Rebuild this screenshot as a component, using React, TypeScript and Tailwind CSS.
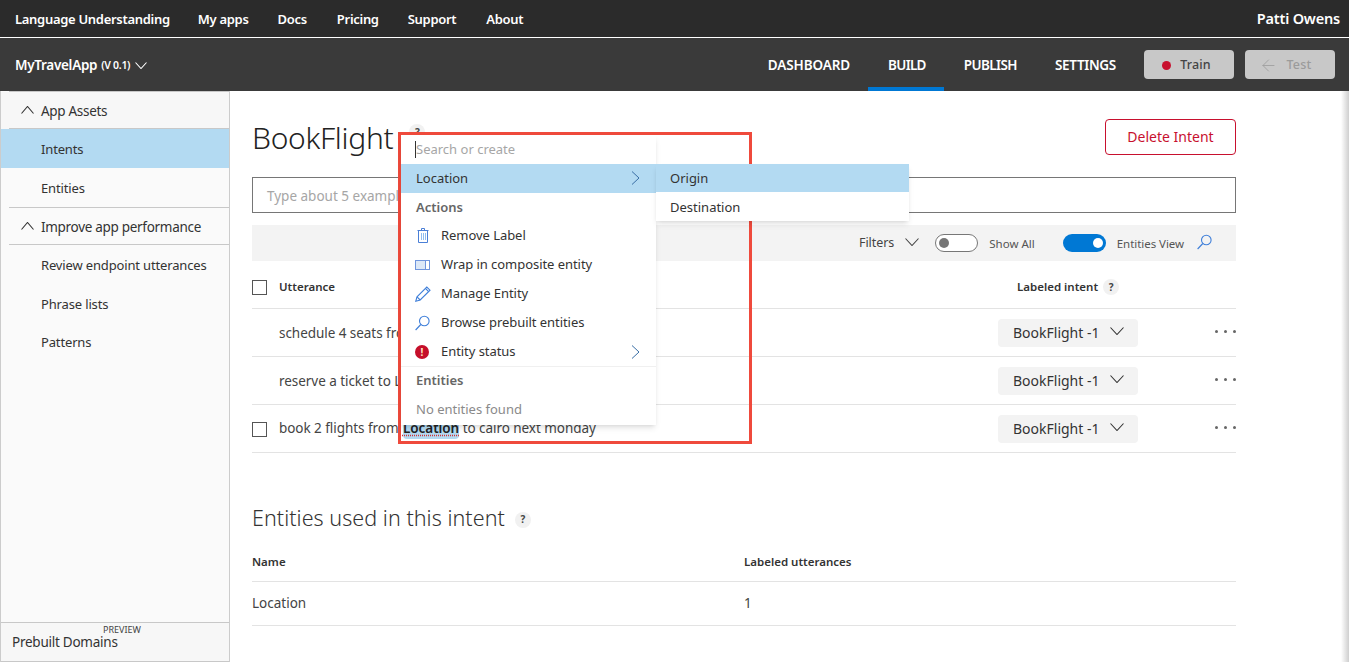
import React from 'react';
import { ArrowLeft } from 'lucide-react';

const font = { fontFamily: '"Noto Sans", sans-serif' };

const Help = ({ cls }: { cls: string }) => (
  <span className={`inline-flex items-center justify-center rounded-full bg-[#f1f1f1] text-[10px] font-bold text-[#444] w-4 h-4 ${cls}`}>?</span>
);

// thin wide chevrons, the icon package ones are too narrow for this UI
const Chev = ({ dir = 'down', w = 14, cls = '' }: { dir?: 'down' | 'up' | 'right'; w?: number; cls?: string }) => {
  if (dir === 'right') {
    return (
      <svg width="9" height="14" viewBox="0 0 9 14" fill="none" stroke="currentColor" strokeWidth="1" className={cls}>
        <polyline points="1,0.5 8,7 1,13.5" />
      </svg>
    );
  }
  const h = Math.round(w * 0.6);
  const pts = dir === 'down' ? `0.5,0.5 ${w / 2},${h - 0.5} ${w - 0.5},0.5` : `0.5,${h - 0.5} ${w / 2},0.5 ${w - 0.5},${h - 0.5}`;
  return (
    <svg width={w} height={h} viewBox={`0 0 ${w} ${h}`} fill="none" stroke="currentColor" strokeWidth="1.1" className={cls}>
      <polyline points={pts} />
    </svg>
  );
};

const SearchIcon = ({ cls = '' }: { cls?: string }) => (
  <svg width="15" height="16" viewBox="0 0 15 16" fill="none" stroke="#3f7fd9" strokeWidth="1.1" className={cls}>
    <circle cx="9.3" cy="6" r="4.8" />
    <line x1="5.8" y1="9.5" x2="0.6" y2="15" />
  </svg>
);

const topLinks = ['My apps', 'Docs', 'Pricing', 'Support', 'About'];

const SideHead = ({ label }: { label: string }) => (
  <div className="flex items-center h-[37px] ml-[8px] pl-[12px] text-[13.5px] text-[#333] border-b border-[#c8c8c8]">
    <Chev dir="up" w={13} cls="mr-[7px] text-[#333]" />
    <span className="tracking-[-0.3px] pt-[2px]">{label}</span>
  </div>
);

const SideItem = ({ label, h, active }: { label: string; h: string; active?: boolean }) => (
  <div className={`flex items-center pl-[40px] pt-[2px] text-[13px] text-[#333] tracking-[-0.15px] ${h} ${active ? 'bg-[#b3daf2]' : ''}`}>{label}</div>
);

const Row = ({ text, check }: { text: React.ReactNode; check?: boolean }) => (
  <div className="flex items-center h-[48px] border-b border-[#e3e3e3]">
    <div className="w-[27px] shrink-0">
      {check && <div className="w-[15px] h-[15px] border border-[#555] mt-[1px]" />}
    </div>
    <div className={`text-[13.5px] text-[#444] w-[719px] tracking-[-0.05px] ${check ? 'pb-[1px]' : 'pt-[2px]'}`}>{text}</div>
    <div className="flex items-center justify-between w-[140px] h-[28px] bg-[#f3f3f3] rounded-sm pl-[15px] pr-[14px] text-[14px] text-[#333]">
      <span>BookFlight -1</span>
      <Chev w={14} cls="-mt-[3px]" />
    </div>
    <div className="flex-1 flex justify-end gap-[6px] pb-[3px]">
      <span className="w-[3px] h-[3px] bg-[#666] rounded-full" />
      <span className="w-[3px] h-[3px] bg-[#666] rounded-full" />
      <span className="w-[3px] h-[3px] bg-[#666] rounded-full" />
    </div>
  </div>
);

const MenuRow = ({ icon, label, arrow }: { icon: React.ReactNode; label: string; arrow?: boolean }) => (
  <div className="flex items-center h-[29px] pl-[14px] pr-[16px] text-[13px] text-[#333]">
    <span className="w-[26px] flex items-center shrink-0">{icon}</span>
    <span className="flex-1 tracking-[-0.05px]">{label}</span>
    {arrow && <Chev dir="right" cls="text-[#3a6ea5]" />}
  </div>
);

const App: React.FC = () => {
  return (
    <div className="relative w-[1349px] h-[662px] overflow-hidden bg-white flex flex-col" style={font}>
      {/* Top bar */}
      <div className="flex items-center justify-between h-[38px] bg-[#2b2b2b] border-b border-white pl-[15px] pr-[9px] text-white shrink-0">
        <div className="flex items-center gap-[29px] text-[13px] font-semibold tracking-[-0.3px] pt-[3px]">
          <span>Language Understanding</span>
          <span className="-ml-[1px]">My apps</span>
          <span>{topLinks[1]}</span>
          <span className="ml-[1px]">{topLinks[2]}</span>
          <span>{topLinks[3]}</span>
          <span className="ml-[1px]">{topLinks[4]}</span>
        </div>
        <span className="text-[14.5px] font-semibold tracking-[-0.2px]">Patti Owens</span>
      </div>

      {/* App bar */}
      <div className="flex items-center h-[53px] bg-[#3a3a3a] pl-[15px] pr-[14px] text-white shrink-0">
        <div className="flex items-center text-[13.5px] font-semibold tracking-[-0.3px] pt-[2px]">
          MyTravelApp
          <span className="text-[10.5px] ml-[4px]">(V 0.1)</span>
          <Chev w={12} cls="ml-[5px]" />
        </div>
        <div className="flex-1" />
        <div className="flex items-center h-full text-[13.5px] font-semibold">
          <div className="pr-[18px] flex items-center h-full pt-[2px] tracking-[-0.1px]">DASHBOARD</div>
          <div className="pl-[20px] pr-[18px] flex items-center h-full border-b-[4px] border-[#0078d4] pt-[5px] tracking-[-0.7px]">BUILD</div>
          <div className="pl-[20px] pr-[19px] flex items-center h-full pt-[2px] tracking-[-0.6px]">PUBLISH</div>
          <div className="px-[19px] flex items-center h-full pt-[2px] tracking-[-0.3px]">SETTINGS</div>
        </div>
        <div className="flex items-center gap-[11px] ml-[9px]">
          <div className="flex items-center justify-center w-[90px] h-[29px] pr-[5px] pt-[1px] rounded-sm bg-[#c8c8c8] text-[12.5px] font-medium text-[#444] tracking-[0.1px]">
            <span className="w-[9px] h-[9px] rounded-full bg-[#c8102e] mr-[9px]" />
            Train
          </div>
          <div className="flex items-center justify-center w-[90px] h-[29px] pr-[10px] pt-[1px] rounded-sm bg-[#c8c8c8] text-[12.5px] font-medium text-[#9b9b9b] tracking-[0.2px]">
            <ArrowLeft size={19} strokeWidth={1} className="mr-[9px]" />
            Test
          </div>
        </div>
      </div>

      <div className="flex flex-1 min-h-0">
        {/* Sidebar */}
        <div className="w-[230px] shrink-0 flex flex-col bg-[#fafafa] border-l border-r border-[#cccccc]">
          <div className="flex-1">
            <div className="h-px ml-[8px] bg-[#c8c8c8]" />
            <div className="bg-[#f7f7f7]"><SideHead label="App Assets" /></div>
            <SideItem label="Intents" h="h-[39px]" active />
            <SideItem label="Entities" h="h-[39px]" />
            <div className="h-px ml-[8px] bg-[#c8c8c8]" />
            <SideHead label="Improve app performance" />
            <SideItem label="Review endpoint utterances" h="h-[40px]" />
            <SideItem label="Phrase lists" h="h-[38px]" />
            <SideItem label="Patterns" h="h-[38px]" />
          </div>
          <div className="relative h-[40px] bg-[#f7f7f7] border-y border-[#c8c8c8] pl-[11px] pt-[9px] text-[13.5px] text-[#333] tracking-[-0.25px]">
            <span className="absolute left-[102px] top-[0px] text-[9px] text-[#444] tracking-normal">PREVIEW</span>
            Prebuilt Domains
          </div>
        </div>

        {/* Main */}
        <div className="w-[984px] ml-[22px] flex flex-col">
          <div className="flex items-center justify-between h-[86px] pt-[7px]">
            <div className="flex items-start">
              <span className="text-[30px] font-light text-[#222] tracking-[-0.3px]">BookFlight</span>
              <Help cls="ml-[16px] mt-[9px]" />
            </div>
            <div className="flex items-center justify-center w-[131px] h-[36px] pb-[2px] border border-[#c8102e] rounded-sm text-[14px] text-[#c8102e] -mt-[1px]">Delete Intent</div>
          </div>
          <div className="flex items-center h-[36px] border border-[#767676] pl-[14px] pt-[3px] text-[13.5px] text-[#a6a6a6]">Type about 5 examples</div>

          <div className="flex items-center justify-end h-[36px] mt-[12px] bg-[#f3f3f3] pr-[24px] text-[11.5px] text-[#555]">
            <span className="text-[12.5px] text-[#444] tracking-[-0.05px]">Filters</span>
            <Chev w={14} cls="ml-[11px] -mt-[3px] text-[#444]" />
            <div className="flex items-center w-[43px] h-[18px] ml-[16px] rounded-full border border-[#777] bg-white pl-[3px]">
              <span className="w-[10px] h-[10px] rounded-full bg-[#767676]" />
            </div>
            <span className="ml-[11px] pt-[1px]">Show All</span>
            <div className="flex items-center justify-end w-[43px] h-[18px] ml-[28px] rounded-full bg-[#0078d4] pr-[3px]">
              <span className="w-[10px] h-[10px] rounded-full bg-white" />
            </div>
            <span className="ml-[11px] pt-[1px] tracking-[-0.05px]">Entities View</span>
            <SearchIcon cls="ml-[13px] -mt-[2px]" />
          </div>

          <div className="flex items-center h-[48px] border-b border-[#e3e3e3] pt-[5px] text-[11.5px] font-semibold text-[#333]">
            <div className="w-[27px] shrink-0"><div className="w-[15px] h-[15px] border border-[#555]" /></div>
            <span className="w-[738px]">Utterance</span>
            <span>Labeled intent</span>
            <Help cls="ml-[5px]" />
          </div>
          <Row text="schedule 4 seats from" />
          <Row text="reserve a ticket to London" />
          <Row check text={<>book 2 flights from <span className="ml-[1px] font-semibold text-[#222] bg-[#b3daf2] rounded-b-sm pb-[2px] underline decoration-dotted decoration-[#d13438] underline-offset-2">Location</span> to cairo next monday</>} />

          <div className="flex items-center mt-[47px] h-[36px] text-[21.5px] font-light text-[#333] tracking-[0.05px]">
            Entities used in this intent
            <Help cls="ml-[10px] mt-[3px]" />
          </div>
          <div className="flex items-center h-[46px] border-b border-[#e3e3e3] text-[11.5px] font-semibold text-[#333] pt-[6px]">
            <span className="w-[492px]">Name</span>
            <span>Labeled utterances</span>
          </div>
          <div className="flex items-center h-[44px] border-b border-[#e3e3e3] text-[13.5px] text-[#444]">
            <span className="w-[492px]">Location</span>
            <span>1</span>
          </div>
        </div>
      </div>

      {/* scroll shadow on the right edge */}
      <div className="absolute right-0 top-[91px] bottom-0 w-[8px] bg-gradient-to-r from-white to-[#cfcfcf]" />

      {/* Entity menu overlay */}
      <div className="absolute left-[398px] top-[132px] w-[354px] h-[312px] border-[3px] border-[#ef4a3c]" />
      <div className="absolute left-[401px] top-[135px] w-[255px] bg-white shadow-md">
        <div className="relative flex items-center h-[29px] pl-[15px] text-[13px] text-[#a6a6a6]">
          <span className="absolute left-[14px] top-[6px] w-px h-[17px] bg-[#333]" />
          Search or create
        </div>
        <div className="flex items-center justify-between h-[29px] pl-[15px] pr-[16px] bg-[#b3daf2] text-[13px] text-[#333]">
          Location
          <Chev dir="right" cls="text-[#3a6ea5] -mt-[2px]" />
        </div>
        <div className="flex items-center h-[28px] pl-[15px] pt-[2px] text-[13px] font-semibold text-[#666]">Actions</div>
        <MenuRow
          icon={
            <svg width="15" height="15" viewBox="0 0 15 15" fill="none" stroke="#4a7fd6" strokeWidth="1" className="ml-[1px]">
              <path d="M1.5 2.5h11M5.5 2.5V0.5h3v2M2.5 2.5v12h9v-12" />
              <path d="M5.5 5v7M7.5 5v7M9.5 5v7" stroke="#8fbdf0" />
            </svg>
          }
          label="Remove Label"
        />
        <MenuRow
          icon={
            <span className="flex w-[15px] h-[10px] border border-[#6f95dd] bg-[#dce8f7]">
              <span className="ml-auto w-[4px] h-full border-l border-[#6f95dd] bg-white" />
            </span>
          }
          label="Wrap in composite entity"
        />
        <MenuRow
          icon={
            <svg width="16" height="16" viewBox="0 0 16 16" fill="none" stroke="#3f7fd9" strokeWidth="1.1">
              <path d="M0.8 15.2l1.2-4.4L11.8 1l3.2 3.2-9.8 9.8z" />
              <path d="M2 10.8l3.2 3.2M10.4 2.4l3.2 3.2" />
            </svg>
          }
          label="Manage Entity"
        />
        <MenuRow icon={<SearchIcon />} label="Browse prebuilt entities" />
        <MenuRow
          icon={<span className="flex items-center justify-center w-[14px] h-[14px] rounded-full bg-[#c50f2a] text-[10px] font-bold leading-none text-[#ffe9c8]">!</span>}
          label="Entity status"
          arrow
        />
        <div className="flex items-center h-[29px] pl-[15px] border-t border-[#f0f0f0] text-[13px] font-semibold text-[#666]">Entities</div>
        <div className="flex items-center h-[30px] pl-[15px] text-[13px] text-[#8a8a8a]">No entities found</div>
      </div>
      <div className="absolute left-[656px] top-[164px] w-[253px] bg-white shadow-md text-[13px] text-[#333]">
        <div className="flex items-center h-[28px] pl-[14px] pt-[1px] bg-[#b3daf2]">Origin</div>
        <div className="flex items-center h-[29px] pl-[14px] pt-[2px]">Destination</div>
      </div>
    </div>
  );
};

export default App;
